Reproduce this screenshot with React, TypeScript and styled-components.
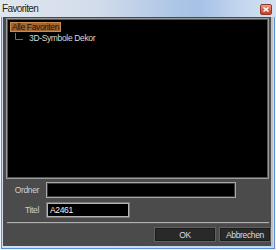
import styled, { createGlobalStyle } from 'styled-components'

const GlobalStyle = createGlobalStyle`
  html, body {
    margin: 0;
    padding: 0;
    background: #ffffff;
  }
  body {
    font-family: "Liberation Sans", Arial, sans-serif;
    font-size: 8.5px;
    letter-spacing: -0.35px;
  }
`

const Window = styled.div`
  width: 276px;
  height: 250px;
  box-sizing: border-box;
  display: flex;
  flex-direction: column;
  background: linear-gradient(90deg, #d3e0f0 0%, #c9d9ee 50%, #bfd3ee 100%);
  box-shadow: inset 0 0 0 1px #f1f5fb, inset 0 0 0 2px #5a8fd6, inset 0 0 0 3px #cddcf1;
`

const TitleBar = styled.div`
  height: 17px;
  flex: none;
  display: flex;
  align-items: center;
  justify-content: space-between;
  padding: 0 4px 0 2px;
  background: linear-gradient(90deg, #dfe6ef 0%, #d2dcea 35%, #afc7e7 62%, #a6c1e6 72%, #c4d7ef 88%, #d4e2f3 100%);
`

const Caption = styled.span`
  font-size: 10px;
  letter-spacing: -0.6px;
  color: #1b1b1b;
  text-shadow: 0 0 3px rgba(255, 255, 255, 0.8);
`

const CloseButton = styled.div`
  width: 12px;
  height: 11px;
  margin-top: 1px;
  box-sizing: border-box;
  border: 1px solid #8d3a2a;
  border-radius: 2px;
  background: linear-gradient(180deg, #eaa08e 0%, #d9644b 50%, #c8412a 100%);
  display: flex;
  align-items: center;
  justify-content: center;
`

const Frame = styled.div`
  flex: 1;
  display: flex;
  padding: 0 3px 4px 3px;
  min-height: 0;
`

const Client = styled.div`
  flex: 1;
  display: flex;
  flex-direction: column;
  background: #4b4b4b;
  border-right: 2px solid #c2c2c2;
  padding: 1px 0 4px 3px;
`

const TreeBox = styled.div`
  height: 161px;
  box-sizing: border-box;
  margin-right: 2px;
  background: #000;
  border: 1px solid #9a9a9a;
  box-shadow: inset 0 0 0 1px #555555;
  padding: 3px 4px 3px 3px;
  display: flex;
  flex-direction: column;
  align-items: flex-start;
`

const RootItem = styled.div`
  height: 8px;
  line-height: 8px;
  padding: 0 1px;
  border: 1px solid #c98a4c;
  background: #a4652e;
  color: #141414;
  white-space: nowrap;
`

const ChildRow = styled.div`
  display: flex;
  align-items: center;
  height: 10px;
  margin-top: 1px;
  color: #dadada;
  white-space: nowrap;
`

const Form = styled.div`
  display: grid;
  grid-template-columns: 33px auto;
  column-gap: 7px;
  row-gap: 4px;
  margin-top: 3px;
  align-items: center;
  justify-items: start;
`

const Label = styled.span`
  justify-self: end;
  color: #cfcfcf;
`

const Field = styled.div<{ $width: number; $active?: boolean }>`
  width: ${p => p.$width}px;
  height: 16px;
  box-sizing: border-box;
  background: #000;
  color: #f2f2f2;
  padding-left: 3px;
  display: flex;
  align-items: center;
  border: 1px solid ${p => (p.$active ? '#7a7a7a' : '#a8a8a8')};
  box-shadow: inset 0 0 0 1px ${p => (p.$active ? '#b4b4b4' : '#3a3a3a')};
`

const Separator = styled.div`
  height: 2px;
  margin: 4px 2px 0 1px;
  background: #b0b0b0;
  border-bottom: 1px solid #5a5a5a;
  box-sizing: border-box;
`

const ButtonRow = styled.div`
  display: flex;
  justify-content: flex-end;
  gap: 3px;
  margin-top: 3px;
`

const Button = styled.div<{ $width: number }>`
  width: ${p => p.$width}px;
  height: 15px;
  box-sizing: border-box;
  background: #292929;
  border: 1px solid #626262;
  box-shadow: inset 0 0 0 1px #1c1c1c;
  color: #dedede;
  display: flex;
  align-items: center;
  justify-content: center;
`

export default function App() {
  return (
    <>
      <GlobalStyle />
      <Window>
        <TitleBar>
          <Caption>Favoriten</Caption>
          <CloseButton>
            <svg width="6" height="5" viewBox="0 0 6 5">
              <path d="M0.5 0.5 L5.5 4.5 M5.5 0.5 L0.5 4.5" stroke="#fff" strokeWidth="1.4" />
            </svg>
          </CloseButton>
        </TitleBar>
        <Frame>
          <Client>
            <TreeBox>
              <RootItem>Alle Favoriten</RootItem>
              <ChildRow>
                <svg width="19" height="10" viewBox="0 0 19 10">
                  <path d="M5.5 0 V6.5 H13" stroke="#707070" strokeWidth="1" fill="none" />
                </svg>
                3D-Symbole Dekor
              </ChildRow>
            </TreeBox>
            <Form>
              <Label>Ordner</Label>
              <Field $width={190} />
              <Label>Titel</Label>
              <Field $width={84} $active>A2461</Field>
            </Form>
            <Separator />
            <ButtonRow>
              <Button $width={62}>OK</Button>
              <Button $width={52}>Abbrechen</Button>
            </ButtonRow>
          </Client>
        </Frame>
      </Window>
    </>
  )
}
